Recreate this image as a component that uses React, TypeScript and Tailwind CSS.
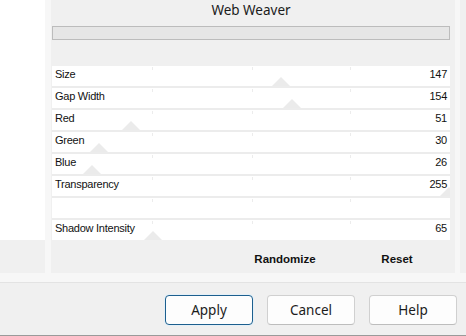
import React from "react";

const rows: { label: string; value: number | null }[] = [
  { label: "Size", value: 147 },
  { label: "Gap Width", value: 154 },
  { label: "Red", value: 51 },
  { label: "Green", value: 30 },
  { label: "Blue", value: 26 },
  { label: "Transparency", value: 255 },
  { label: "", value: null },
  { label: "Shadow Intensity", value: 65 },
];

function Row({ label, value }: { label: string; value: number | null }) {
  const pos = value === null ? null : (value / 255) * 397;
  return (
    <div className="relative h-[20px] bg-white flex items-start justify-between pl-[3px] pr-[3px] overflow-hidden">
      <span className="leading-[17px] text-[11px] tracking-[-0.25px] text-[#111]">{label}</span>
      <span className="leading-[17px] text-[11px] tracking-[-0.25px] text-[#111]">{value ?? ""}</span>
      <div className="absolute left-[100px] top-[1px] w-px h-[3px] bg-[#ececec]" />
      <div className="absolute left-[200px] top-[1px] w-px h-[3px] bg-[#ececec]" />
      <div className="absolute left-[298px] top-[1px] w-px h-[3px] bg-[#ececec]" />
      {pos !== null && (
        <svg
          className="absolute bottom-0"
          style={{ left: pos - 9 }}
          width="18"
          height="9"
          viewBox="0 0 18 9"
        >
          <polygon points="9,0 18,9 0,9" fill="#ebebeb" />
        </svg>
      )}
    </div>
  );
}

function Btn({ children, primary }: { children: React.ReactNode; primary?: boolean }) {
  return (
    <div
      className={
        "w-[88px] h-[30px] rounded-[4px] bg-[#fdfdfd] flex items-center justify-center text-[13.5px] text-[#1b1b1b] " +
        (primary
          ? "border border-[#1d5f8e] shadow-[0_0_0_1px_#e4f0f8]"
          : "border border-[#d0d0d0] border-b-[#bdbdbd]")
      }
    >
      {children}
    </div>
  );
}

export default function App() {
  return (
    <div
      className="w-[466px] h-[336px] bg-[#f0f0f0] flex flex-col overflow-hidden"
      style={{ fontFamily: '"Liberation Sans", Arial, sans-serif' }}
    >
      <div className="h-[282px] bg-[#f7f7f7] flex shrink-0">
        <div className="w-[45px] flex flex-col shrink-0">
          <div className="h-[240px] bg-white" />
          <div className="h-[33px] bg-[#f0f0f0]" />
        </div>
        <div className="w-[6px] shrink-0" />
        <div className="w-[404px] h-[273px] bg-[#f0f0f0] flex flex-col pl-px shrink-0">
          <div className="w-[398px] h-[26px] flex items-start justify-center">
            <span
              className="text-[13.5px] leading-[21px] text-[#1b1b1b]"
              style={{ fontFamily: '"Noto Sans", sans-serif' }}
            >
              Web Weaver
            </span>
          </div>
          <div className="w-[398px] h-[14px] bg-[#e6e6e6] border border-[#bcbcbc]" />
          <div className="h-[26px]" />
          <div className="w-[398px] flex flex-col gap-[2px] bg-[#ececec]">
            {rows.map((r, i) => (
              <Row key={i} label={r.label} value={r.value} />
            ))}
          </div>
          <div className="w-[398px] flex-1 flex items-center pt-[6px]">
            <div className="w-[183px]" />
            <div className="w-[100px] text-center text-[11.5px] font-bold text-[#111]">Randomize</div>
            <div className="w-[12px]" />
            <div className="w-[100px] text-center text-[11.5px] font-bold text-[#111]">Reset</div>
          </div>
        </div>
        <div className="w-[5px] shrink-0" />
        <div className="w-[6px] h-[273px] bg-[#f0f0f0] shrink-0" />
      </div>
      <div
        className="flex-1 border-t border-[#e3e3e3] border-b border-b-[#9a9a9a] flex items-start justify-end pt-[12px] pr-[9px] gap-[14px]"
        style={{ fontFamily: '"Noto Sans", sans-serif' }}
      >
        <Btn primary>Apply</Btn>
        <Btn>Cancel</Btn>
        <Btn>Help</Btn>
      </div>
    </div>
  );
}
